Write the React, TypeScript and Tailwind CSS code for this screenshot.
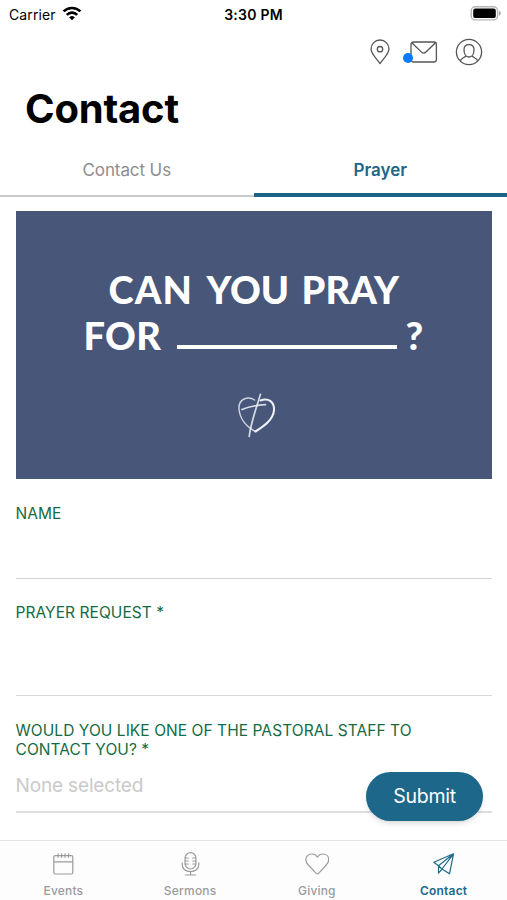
import React from 'react';

const WifiIcon = () => (
  <svg width="20" height="16" viewBox="0 0 20 16" fill="none" stroke="#000" strokeWidth="2.6">
    <path d="M1.6 5.4a12 12 0 0 1 16.8 0" />
    <path d="M4.8 8.8a7.4 7.4 0 0 1 10.4 0" />
    <path d="M10 14.3 7.2 11.4a4 4 0 0 1 5.6 0z" fill="#000" stroke="none" />
  </svg>
);

const BatteryIcon = () => (
  <svg width="32" height="16" viewBox="0 0 32 16">
    <rect x="1.2" y="0.7" width="26.4" height="13.2" rx="4" fill="#fff" stroke="#b5b5b5" strokeWidth="1.4" />
    <rect x="3.2" y="2.5" width="22.6" height="9.6" rx="2.2" fill="#000" />
    <path d="M29 5.1c2.4.9 2.4 3.6 0 4.6z" fill="#a3a3a3" />
  </svg>
);

const PinIcon = () => (
  <svg width="20" height="26" viewBox="0 0 20 26" fill="none" stroke="#555" strokeWidth="1.3" strokeLinejoin="round">
    <path d="M10 24.6C6.2 19.3 1 14.600 1 10a9 9 0 0 1 18 0c0 4.600-5.200 9.300-9 14.600z" />
    <circle cx="10" cy="10.2" r="2.7" />
  </svg>
);

const MailIcon = () => (
  <svg width="28" height="22" viewBox="0 0 28 22" fill="none" stroke="#555" strokeWidth="1.3" strokeLinejoin="round">
    <rect x="1" y="1" width="25.4" height="20" rx="2.5" />
    <path d="M1.800 1.800l9.700 9.300c1.400 1.300 3 1.300 4.400 0l9.700-9.300" />
  </svg>
);

const ProfileIcon = () => (
  <svg width="28" height="28" viewBox="0 0 28 28" fill="none" stroke="#555" strokeWidth="1.3">
    <circle cx="14" cy="14" r="12.6" />
    <path d="M9 11.800c0-3.300 2.100-5.200 5-5.200s5 1.900 5 5.200c0 4-2 7.200-5 7.200s-5-3.200-5-7.200z" />
    <path d="M5.300 22.900c.5-2.300 3.400-3.200 5.800-4.800M22.700 22.900c-.5-2.300-3.400-3.200-5.800-4.800" />
  </svg>
);

const HeartCross = () => (
  <svg width="40" height="46" viewBox="0 0 40 46" fill="none" stroke="#eef1f8" strokeLinecap="round">
    <path d="M17.6 7C11 2.500 1.500 6 2 15.500 2.500 25 9 33.500 18.500 38.500" strokeWidth="1.500" opacity=".8" />
    <path d="M18.500 38.500C27 33 36 27 37 17.500 37.700 9 31.500 4.500 23.500 7.500" strokeWidth="2.100" />
    <path d="M23.500 1.300C19.500 14 13.500 31 12.200 43.500" strokeWidth="1.700" opacity=".85" />
    <path d="M5 16.500C13 13 20 12.200 28.500 11.600" strokeWidth="1.700" opacity=".85" />
  </svg>
);

const CalendarIcon = () => (
  <svg width="24" height="24" viewBox="0 0 24 24" fill="none" stroke="currentColor" strokeWidth="1.2">
    <rect x="2.800" y="3.700" width="19" height="18.300" rx="1.500" />
    <path d="M2.800 9.800h19M7.100 1.500v4.300M10.600 1.500v4.300M14.100 1.500v4.300M17.600 1.500v4.300" />
  </svg>
);

const MicIcon = () => (
  <svg width="24" height="24" viewBox="0 0 24 24" fill="none" stroke="currentColor" strokeWidth="1.200" strokeLinecap="round">
    <rect x="7.100" y="0.700" width="10.800" height="16.300" rx="5.400" />
    <path d="M7.100 6h3.200M7.100 9h3.200M7.100 12h3.200M17.900 6h-3.200M17.900 9h-3.200M17.900 12h-3.200" />
    <path d="M4.200 10.800v1.500c0 4.600 3.600 7.400 8.300 7.400s8.300-2.800 8.300-7.400v-1.500M12.500 19.700v3.200M7.500 23h10" />
  </svg>
);

const HeartIcon = () => (
  <svg width="24" height="24" viewBox="0 0 24 24" fill="none" stroke="currentColor" strokeWidth="1.200" strokeLinejoin="round">
    <path d="M12.400 22Q11.800 22 10.500 20.600L3.300 13C1.600 11.200.800 9.700.800 7.800.800 4.500 3.300 2 6.600 2c2.400 0 4.600 1.200 5.800 3.200C13.600 3.200 15.800 2 18.200 2c3.300 0 5.500 2.500 5.500 5.800 0 1.900-.800 3.400-2.500 5.200l-6.900 7.600Q13 22 12.400 22z" />
  </svg>
);

const PlaneIcon = () => (
  <svg width="24" height="24" viewBox="0 0 24 24" fill="none" stroke="currentColor" strokeWidth="1.200" strokeLinejoin="round">
    <path d="M21.500 1.800 1.800 10.200l4.700 3.600 15-12-4 20-7.500-4.800z" />
    <path d="M6.500 13.800v7.400l3.500-4.200-3.500-3.200" />
  </svg>
);

const tabs = [
  { label: 'Events', icon: CalendarIcon },
  { label: 'Sermons', icon: MicIcon },
  { label: 'Giving', icon: HeartIcon },
  { label: 'Contact', icon: PlaneIcon, active: true },
];

const StatusBar = () => (
  <div className="grid h-7 shrink-0 grid-cols-3 items-center text-[14px]">
    <div className="flex items-center gap-[6px] pl-[9px]">
      <span className="tracking-[0.1px]">Carrier</span>
      <WifiIcon />
    </div>
    <span className="text-center font-semibold tracking-[0.250px]">3:30 PM</span>
    <div className="flex justify-end pr-[5px]">
      <BatteryIcon />
    </div>
  </div>
);

const Banner = () => (
  <div className="mx-[15.500px] mt-[14px] h-[268px] shrink-0 bg-[#475679] font-['Lato',sans-serif] text-[38px] font-black leading-[46px] text-white">
    <div className="flex pl-[93px] pt-[55px]">
      <span className="w-[98px] tracking-[1.200px]">CAN</span>
      <span className="w-[95px] tracking-[0.100px]">YOU</span>
      <span className="tracking-[0.100px]">PRAY</span>
    </div>
    <div className="flex pl-[68px]">
      <span className="w-[93px] tracking-[0.300px]">FOR</span>
      <span className="mt-[33px] h-1 w-[220px] bg-white" />
      <span className="ml-[9px]">?</span>
    </div>
    <div className="ml-[221px] mt-[35px]">
      <HeartCross />
    </div>
  </div>
);

const Field = ({ label, className }: { label: string; className: string }) => (
  <div className={`shrink-0 border-b-[1.500px] border-[#d6d6d6] ${className}`}>
    <label className="block text-[15.500px] leading-[19px] tracking-[0.060px] text-[#146b43]">{label}</label>
  </div>
);

const App: React.FC = () => {
  return (
    <div className="flex h-[900px] w-[507px] flex-col overflow-hidden bg-white font-['Inter',sans-serif] text-black">
      <StatusBar />

      <header className="shrink-0">
        <div className="flex h-12 items-center justify-end pr-6">
          <PinIcon />
          <div className="relative ml-5">
            <MailIcon />
            <span className="absolute -left-[7px] top-[12px] h-[10px] w-[10px] rounded-full bg-[#0a7aff]" />
          </div>
          <div className="ml-[17px]">
            <ProfileIcon />
          </div>
        </div>
        <h1 className="h-[69px] pl-[25px] pt-[8px] text-[40px] font-bold leading-[50px] tracking-[-0.200px]">Contact</h1>
        <div className="flex h-[52px] text-[17px] leading-[50px]">
          <button className="flex-1 border-b-2 border-[#cbcbcb] tracking-[-0.100px] text-[#8d8d8d]">Contact Us</button>
          <button className="flex-1 border-b-4 border-[#1a6585] font-semibold text-[#216587]">Prayer</button>
        </div>
      </header>

      <Banner />

      <form className="flex flex-1 flex-col overflow-hidden px-[15.500px]">
        <Field label="NAME" className="mt-[25px] h-[75px]" />
        <Field label="PRAYER REQUEST *" className="mt-[24px] h-[93px]" />
        <Field label="WOULD YOU LIKE ONE OF THE PASTORAL STAFF TO CONTACT YOU? *" className="mt-[25px] h-[40px] border-none pr-[60px]" />
        <div className="h-[52px] shrink-0 border-b-2 border-[#dedede] pt-[12px] text-[19px] leading-[26px] tracking-[-0.150px] text-[#cacaca]">
          None selected
        </div>
      </form>

      <nav className="relative flex h-[60px] shrink-0 border-t border-[#e4e4e4] bg-[#fdfdfd]">
        <button
          type="submit"
          className="absolute -top-[69px] right-[24px] h-[49px] w-[117px] rounded-full bg-[#1c678a] text-[19.500px] tracking-[-0.250px] text-white shadow-md shadow-black/10"
        >
          Submit
        </button>
        {tabs.map(({ label, icon: Icon, active }) => (
          <div
            key={label}
            className={`flex flex-1 flex-col items-center pt-[11px] text-[12px] tracking-[0.200px] ${
              active ? 'font-semibold text-[#20698d]' : 'font-medium text-[#9b9b9b]'
            }`}
          >
            <Icon />
            <span className="mt-[7px] leading-4">{label}</span>
          </div>
        ))}
      </nav>
    </div>
  );
};

export default App;
